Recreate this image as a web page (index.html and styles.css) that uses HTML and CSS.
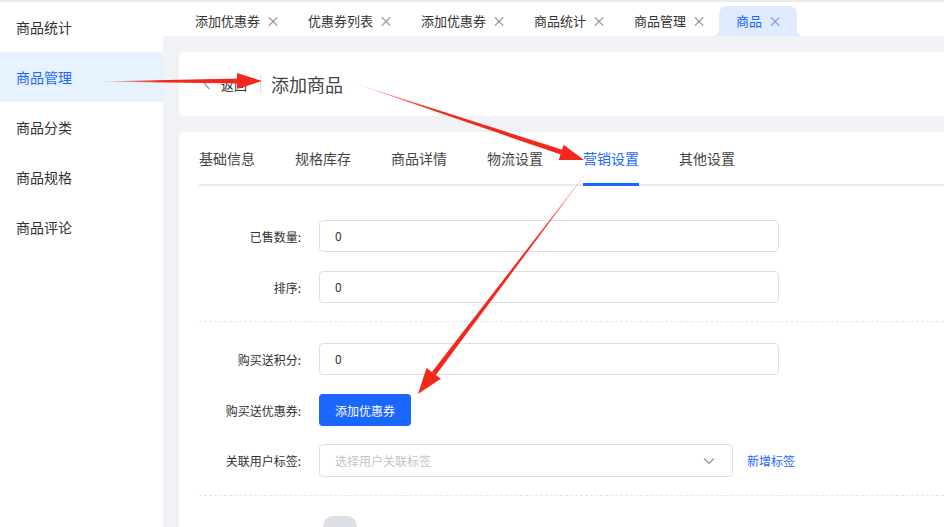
FILE: index.html
```html
<!DOCTYPE html>
<html lang="zh-CN">
<head>
  <meta charset="UTF-8" />
  <meta name="viewport" content="width=device-width, initial-scale=1.0"/>
  <title>添加商品</title>
  <link rel="stylesheet" href="styles.css">
</head>
<body>
  <div class="layout">
    <aside class="sidebar">
      <div class="side-item">商品统计</div>
      <div class="side-item active">商品管理</div>
      <div class="side-item">商品分类</div>
      <div class="side-item">商品规格</div>
      <div class="side-item">商品评论</div>
    </aside>

    <main class="main">
      <div class="tagbar">
        <div class="tag">添加优惠券<span class="tag-close">×</span></div>
        <div class="tag">优惠券列表<span class="tag-close">×</span></div>
        <div class="tag">添加优惠券<span class="tag-close">×</span></div>
        <div class="tag">商品统计<span class="tag-close">×</span></div>
        <div class="tag">商品管理<span class="tag-close">×</span></div>
        <div class="tag active">商品<span class="tag-close">×</span></div>
      </div>

      <div class="content">
        <div class="card page-head">
          <svg class="back-icon" width="8" height="12" viewBox="0 0 8 12">
            <path d="M6.5 1 L1.5 6 L6.5 11" fill="none" stroke="#999" stroke-width="1.1"/>
          </svg>
          <span class="back-text">返回</span>
          <span class="head-divider"></span>
          <span class="head-title">添加商品</span>
        </div>

        <div class="card form-card">
          <div class="ptabs">
            <div class="ptab">基础信息</div>
            <div class="ptab">规格库存</div>
            <div class="ptab">商品详情</div>
            <div class="ptab">物流设置</div>
            <div class="ptab active">营销设置</div>
            <div class="ptab">其他设置</div>
          </div>

          <div class="section first">
            <div class="row">
              <label class="label">已售数量:</label>
              <div class="input">0</div>
            </div>
            <div class="row">
              <label class="label">排序:</label>
              <div class="input">0</div>
            </div>
          </div>

          <div class="section">
            <div class="row">
              <label class="label">购买送积分:</label>
              <div class="input">0</div>
            </div>
            <div class="row">
              <label class="label">购买送优惠券:</label>
              <button class="btn-primary">添加优惠券</button>
            </div>
            <div class="row tight">
              <label class="label">关联用户标签:</label>
              <div class="select">
                <span class="placeholder">选择用户关联标签</span>
                <svg width="12" height="8" viewBox="0 0 12 8">
                  <path d="M1 1.5 L6 6.5 L11 1.5" fill="none" stroke="#909399" stroke-width="1.1"/>
                </svg>
              </div>
              <a class="link">新增标签</a>
            </div>
          </div>

          <div class="section last">
            <div class="row">
              <label class="label"></label>
              <span class="switch"></span>
            </div>
          </div>
        </div>
      </div>
    </main>
  </div>

  <!-- annotation arrows drawn over the screenshot -->
  <svg class="arrows" width="944" height="527" viewBox="0 0 944 527">
    <defs>
      <linearGradient id="g1" gradientUnits="userSpaceOnUse" x1="95" y1="82" x2="240" y2="81">
        <stop offset="0" stop-color="#f2281c" stop-opacity="0"/>
        <stop offset="0.45" stop-color="#f2281c" stop-opacity="1"/>
      </linearGradient>
      <linearGradient id="g2" gradientUnits="userSpaceOnUse" x1="350" y1="82" x2="560" y2="152">
        <stop offset="0" stop-color="#f2281c" stop-opacity="0.1"/>
        <stop offset="0.4" stop-color="#f2281c" stop-opacity="1"/>
      </linearGradient>
      <linearGradient id="g3" gradientUnits="userSpaceOnUse" x1="590" y1="168" x2="434" y2="373">
        <stop offset="0" stop-color="#f2281c" stop-opacity="0.3"/>
        <stop offset="0.35" stop-color="#f2281c" stop-opacity="1"/>
      </linearGradient>
    </defs>
    <polygon points="95,81.5 240,78.5 240,83.5" fill="url(#g1)"/>
    <polygon points="262,81 237,73 237,89" fill="#f2281c"/>

    <polygon points="350,82 562.4,149.8 560.8,154.6" fill="url(#g2)"/>
    <polygon points="584,160 563.7,144.8 558.7,160" fill="#f2281c"/>

    <polygon points="590,168 435.9,374.9 431.9,371.9" fill="url(#g3)"/>
    <polygon points="418,394 440.9,378.8 426.5,367.9" fill="#f2281c"/>
  </svg>
</body>
</html>
```

FILE: styles.css
```css
* {
  box-sizing: border-box;
}
body {
  margin: 0;
  width: 944px;
  height: 527px;
  overflow: hidden;
  position: relative;
  font-family: "Noto Sans CJK SC", "Noto Sans", sans-serif;
  color: #303133;
  background: #f0f2f5;
}
.layout {
  display: flex;
  height: 527px;
  border-top: 2px solid #ebebeb;
}

/* sidebar */
.sidebar {
  width: 163px;
  flex-shrink: 0;
  background: #fff;
}
.side-item {
  height: 50px;
  line-height: 50px;
  padding-left: 16px;
  font-size: 14px;
  color: #303133;
}
.side-item.active {
  background: #e7f2ff;
  color: #1a66ff;
}

/* top tag bar */
.main {
  flex: 1;
  min-width: 0;
}
.tagbar {
  display: flex;
  align-items: flex-end;
  height: 34px;
  padding-left: 15px;
  background: #fff;
}
.tag {
  position: relative;
  height: 30px;
  line-height: 28px;
  padding: 0 17px;
  font-size: 13px;
  color: #333;
  white-space: nowrap;
}
.tag-close {
  display: inline-block;
  margin-left: 6px;
  width: 8px;
  font-size: 14px;
  color: #8c8c8c;
}
.tag.active {
  margin-left: 2px;
  padding-right: 21px;
  background: #e1ebff;
  color: #1a66ff;
  border-radius: 8px 8px 0 0;
}
.tag.active .tag-close {
  color: #6f98f0;
}
.tag.active::before,
.tag.active::after {
  content: "";
  position: absolute;
  bottom: 0;
  width: 6px;
  height: 6px;
}
.tag.active::before {
  left: -6px;
  background: radial-gradient(circle at 0 0, transparent 6px, #e1ebff 6px);
}
.tag.active::after {
  right: -6px;
  background: radial-gradient(circle at 100% 0, transparent 6px, #e1ebff 6px);
}

/* content */
.content {
  padding: 16px 0 0 16px;
}
.card {
  background: #fff;
  border-radius: 4px 0 0 4px;
}
.page-head {
  display: flex;
  align-items: center;
  height: 64px;
  padding-left: 24px;
}
.back-icon {
  margin-right: 10px;
}
.back-text {
  font-size: 13px;
  color: #333;
}
.head-divider {
  width: 1px;
  height: 18px;
  margin: 0 10px 0 13px;
  background: #dcdfe6;
}
.head-title {
  font-size: 18px;
  color: #444;
}

.form-card {
  margin-top: 16px;
  padding-left: 20px;
  height: 400px;
}
.ptabs {
  display: flex;
  gap: 40px;
  border-bottom: 2px solid #e8eaee;
}
.ptab {
  position: relative;
  height: 52px;
  line-height: 52px;
  font-size: 14px;
  color: #444;
}
.ptab.active {
  color: #1a66ff;
}
.ptab.active::after {
  content: "";
  position: absolute;
  left: 0;
  right: 0;
  bottom: -2px;
  height: 3px;
  background: #1a66ff;
}

/* form */
.section {
  padding: 21px 0 18px;
  border-bottom: 1px dashed #e4e6ea;
}
.section.first {
  padding-top: 34px;
}
.section.last {
  border-bottom: none;
  padding-top: 20px;
}
.row {
  display: flex;
  align-items: center;
  margin-top: 19px;
}
.section .row:first-child {
  margin-top: 0;
}
.row.tight {
  margin-top: 18px;
}
.label {
  width: 120px;
  padding-right: 18px;
  text-align: right;
  font-size: 12px;
  color: #303133;
}
.input {
  width: 460px;
  height: 32px;
  line-height: 30px;
  padding: 0 15px;
  border: 1px solid #dcdfe6;
  border-radius: 4px;
  font-size: 12px;
  color: #333;
}
.btn-primary {
  height: 32px;
  padding: 0 16px;
  border: none;
  border-radius: 4px;
  background: #1a66ff;
  color: #fff;
  font-family: inherit;
  font-size: 12px;
}
.select {
  display: flex;
  align-items: center;
  justify-content: space-between;
  width: 414px;
  height: 33px;
  padding: 0 17px 0 15px;
  border: 1px solid #dcdfe6;
  border-radius: 4px;
}
.placeholder {
  font-size: 12px;
  color: #c0c4cc;
}
.link {
  margin-left: 14px;
  font-size: 12px;
  color: #1a66ff;
}
.switch {
  display: inline-block;
  width: 34px;
  height: 20px;
  margin-left: 4px;
  border-radius: 10px;
  background: #dcdfe6;
}

.arrows {
  position: absolute;
  left: 0;
  top: 0;
  pointer-events: none;
}
```
